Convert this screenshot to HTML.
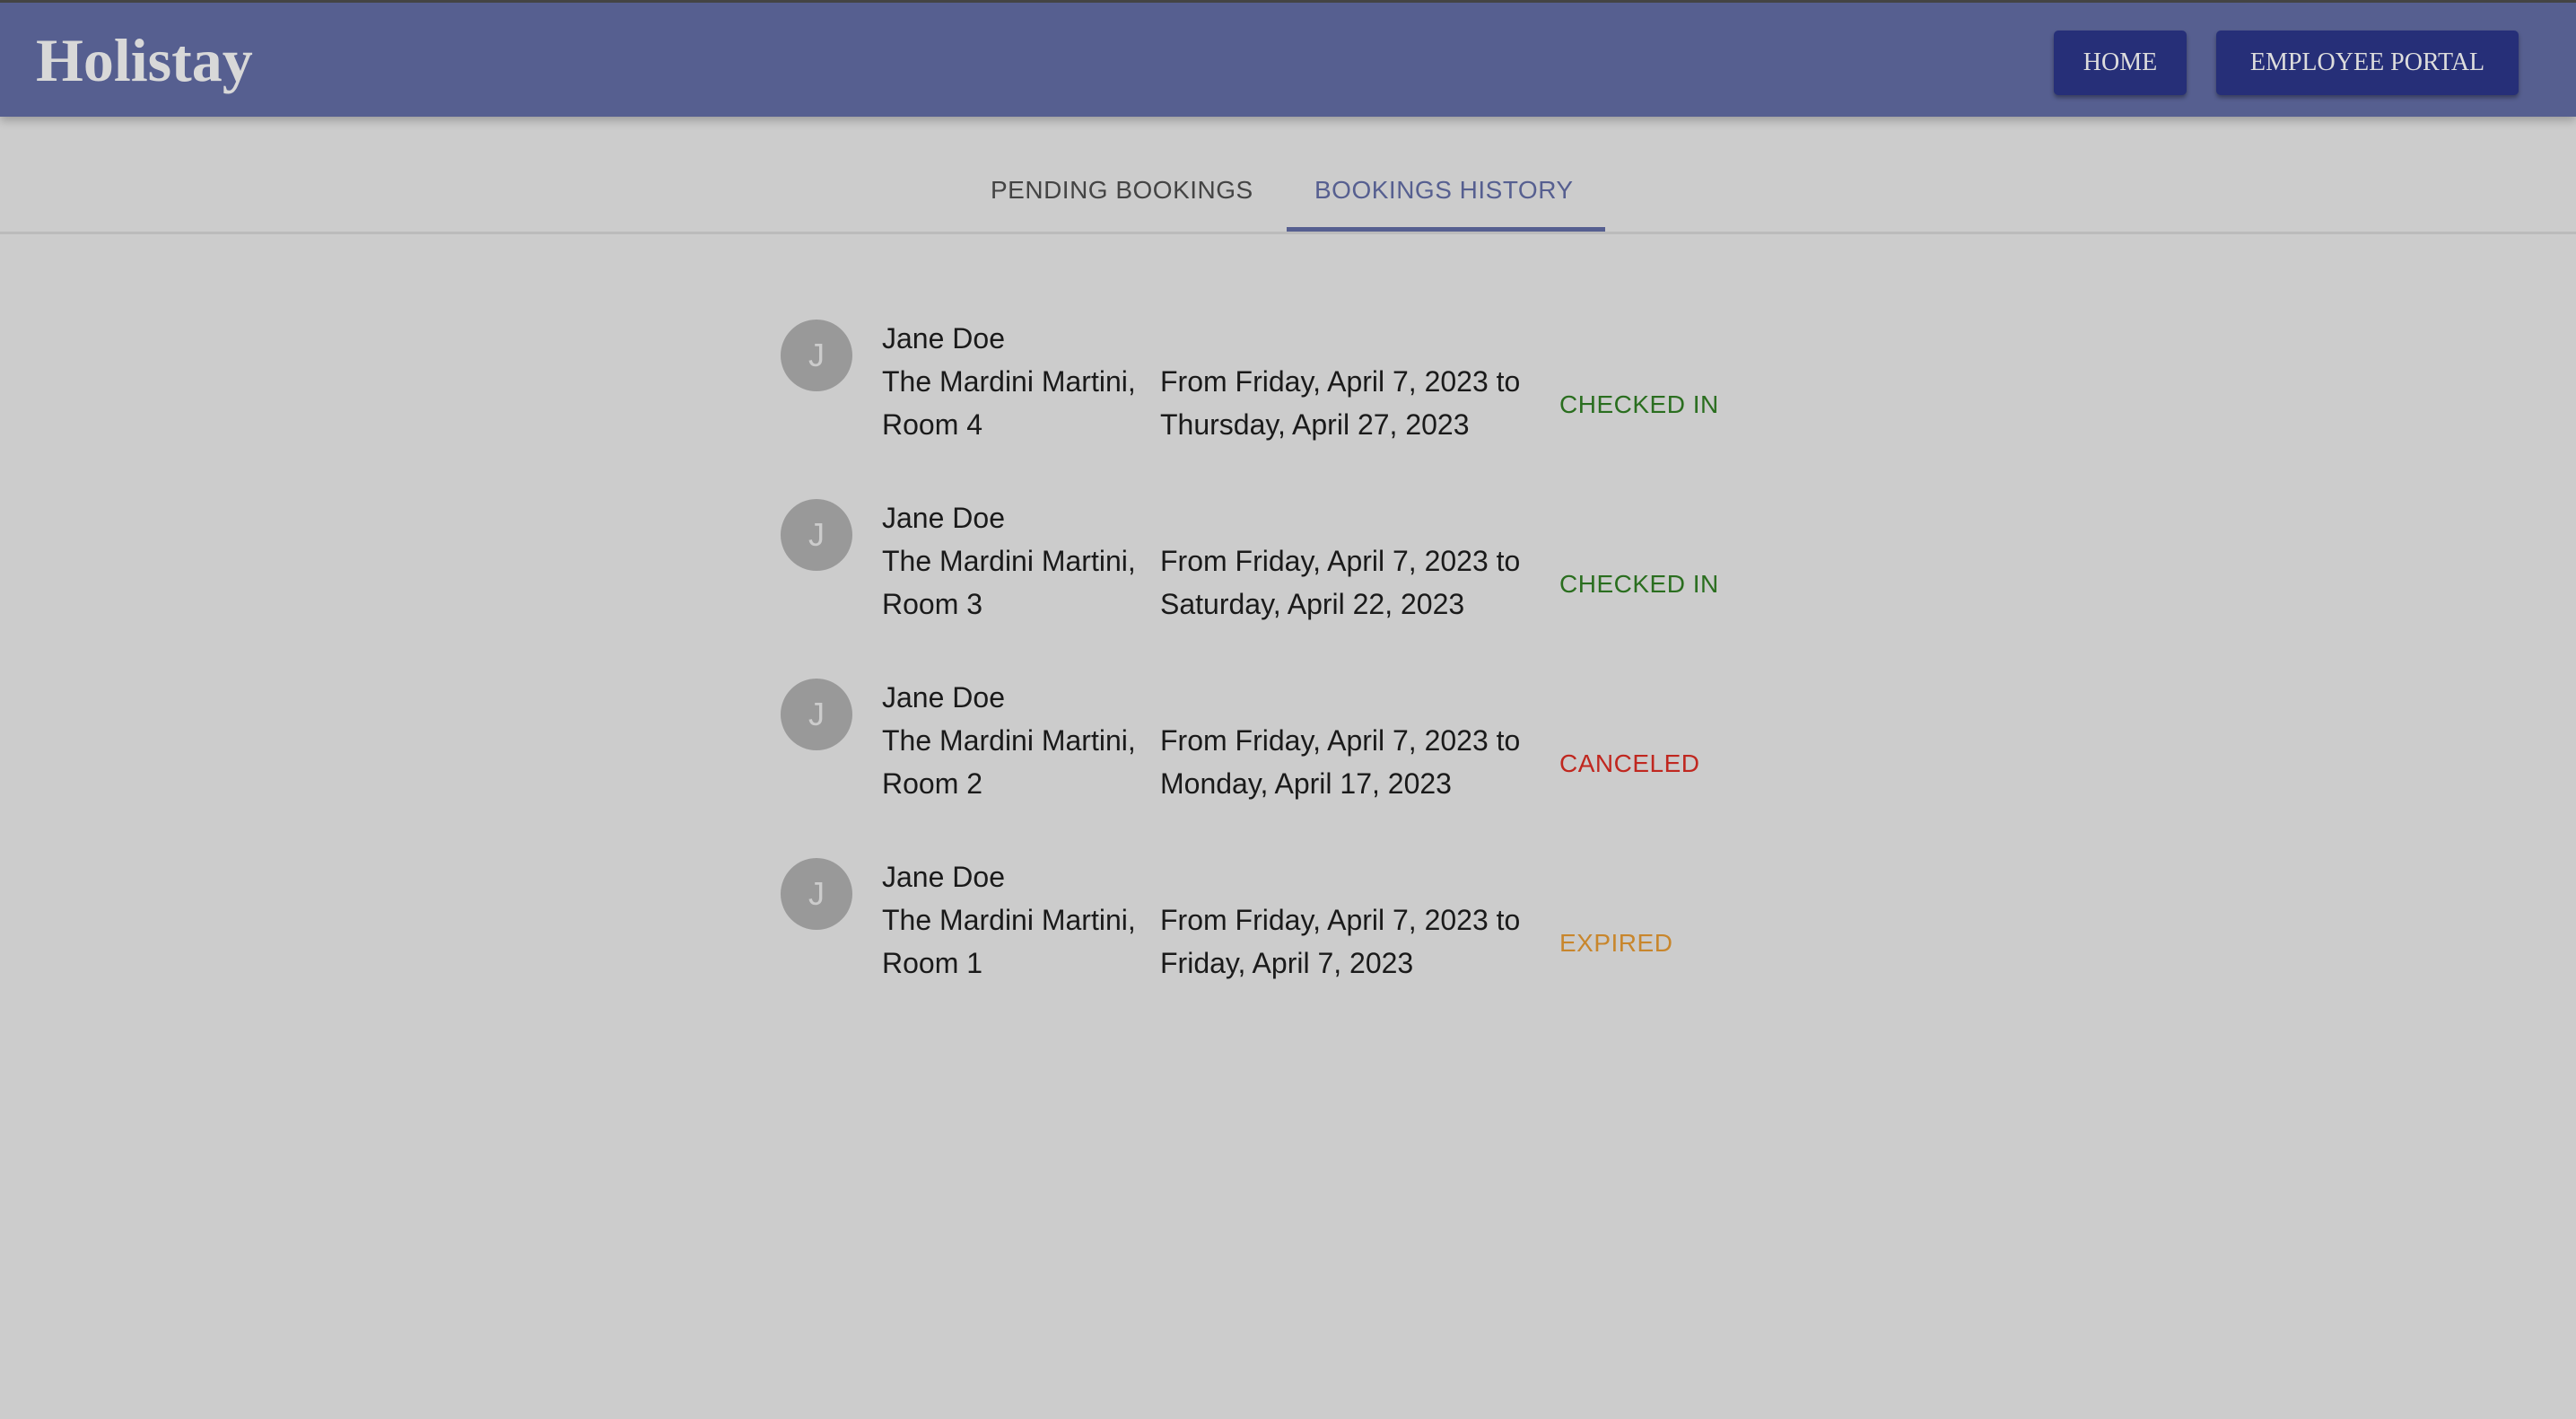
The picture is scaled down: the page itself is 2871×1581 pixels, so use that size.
<!DOCTYPE html>
<html><head><meta charset="utf-8"><style>
html,body{margin:0;padding:0;width:2871px;height:1581px;background:#cccccc;overflow:hidden;font-family:"Liberation Sans",Arial,sans-serif}
.hdr{position:absolute;left:0;top:0;width:2871px;height:130px;background:#565f90;border-top:3px solid #444;box-sizing:border-box;box-shadow:0 4px 10px rgba(0,0,0,.25)}
.logo{position:absolute;left:40px;top:24px;font-family:"Liberation Serif",serif;font-weight:bold;font-size:68px;color:#d8d8d8;line-height:80px}
.btn{position:absolute;top:31px;height:72px;background:#262f78;color:#ddd;font-family:"Liberation Serif",serif;font-size:28px;line-height:72px;text-align:center;border-radius:5px;box-shadow:0 3px 5px rgba(0,0,0,.35)}
.tab{position:absolute;top:192px;font-size:28px;line-height:40px;letter-spacing:0.5px}
.ind{position:absolute;left:1434px;top:253px;width:355px;height:5px;background:#565f90}
.div{position:absolute;left:0;top:258px;width:2871px;height:3px;background:#bbb}
.row{position:absolute;left:0;width:2871px;height:200px}
.av{position:absolute;left:870px;top:0;width:80px;height:80px;border-radius:50%;background:#999;color:#ccc;font-size:36px;line-height:80px;text-align:center}
.t{position:absolute;font-size:32px;line-height:48px;color:#1a1a1a;white-space:nowrap}
.st{position:absolute;left:1738px;top:75px;font-size:28px;line-height:40px;letter-spacing:0.5px}
</style></head><body>
<div class="hdr"><div class="logo">Holistay</div>
<div class="btn" style="left:2289px;width:148px">HOME</div>
<div class="btn" style="left:2470px;width:337px">EMPLOYEE PORTAL</div></div>
<div class="tab" style="left:1104px;color:#444">PENDING BOOKINGS</div>
<div class="tab" style="left:1465px;color:#565f90">BOOKINGS HISTORY</div>
<div class="div"></div><div class="ind"></div>

<div class="row" style="top:356px"><div class="av">J</div>
<div class="t" style="left:983px;top:-3px">Jane Doe</div>
<div class="t" style="left:983px;top:45px">The Mardini Martini,<br>Room 4</div>
<div class="t" style="left:1293px;top:45px">From Friday, April 7, 2023 to<br>Thursday, April 27, 2023</div>
<div class="st" style="color:#2a6e1f">CHECKED IN</div></div>

<div class="row" style="top:556px"><div class="av">J</div>
<div class="t" style="left:983px;top:-3px">Jane Doe</div>
<div class="t" style="left:983px;top:45px">The Mardini Martini,<br>Room 3</div>
<div class="t" style="left:1293px;top:45px">From Friday, April 7, 2023 to<br>Saturday, April 22, 2023</div>
<div class="st" style="color:#2a6e1f">CHECKED IN</div></div>

<div class="row" style="top:756px"><div class="av">J</div>
<div class="t" style="left:983px;top:-3px">Jane Doe</div>
<div class="t" style="left:983px;top:45px">The Mardini Martini,<br>Room 2</div>
<div class="t" style="left:1293px;top:45px">From Friday, April 7, 2023 to<br>Monday, April 17, 2023</div>
<div class="st" style="color:#c0271f">CANCELED</div></div>

<div class="row" style="top:956px"><div class="av">J</div>
<div class="t" style="left:983px;top:-3px">Jane Doe</div>
<div class="t" style="left:983px;top:45px">The Mardini Martini,<br>Room 1</div>
<div class="t" style="left:1293px;top:45px">From Friday, April 7, 2023 to<br>Friday, April 7, 2023</div>
<div class="st" style="color:#c8862c">EXPIRED</div></div>
</body></html>
